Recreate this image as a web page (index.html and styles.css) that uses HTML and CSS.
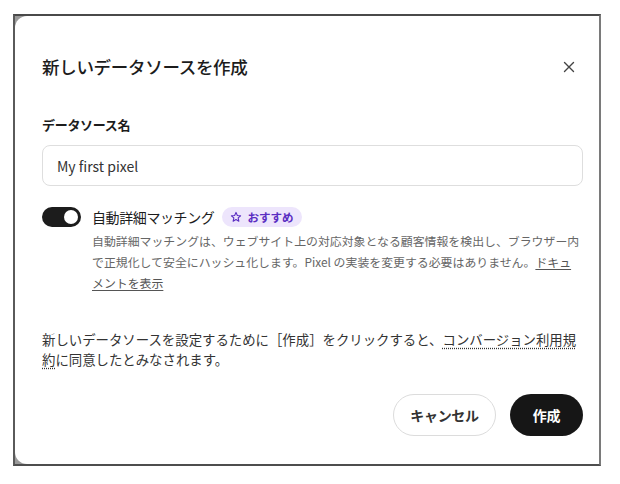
FILE: index.html
```html
<!DOCTYPE html>
<html lang="ja">
<head>
<meta charset="utf-8">
<title>新しいデータソースを作成</title>
<link rel="stylesheet" href="styles.css">
</head>
<body>
<div class="frame">
  <div class="dialog">
    <div class="header">
      <h1 class="title">新しいデータソースを作成</h1>
      <button class="close" aria-label="閉じる">
        <svg width="12" height="12" viewBox="0 0 12 12"><path d="M1.5 1.5 L10.5 10.5 M10.5 1.5 L1.5 10.5" stroke="#444" stroke-width="1.4" stroke-linecap="round" fill="none"/></svg>
      </button>
    </div>
    <label class="field-label">データソース名</label>
    <div class="input">My first pixel</div>
    <div class="option">
      <div class="toggle"><span class="knob"></span></div>
      <div class="option-body">
        <div class="option-head">
          <span class="option-title">自動詳細マッチング</span>
          <span class="badge">
            <svg width="12" height="12" viewBox="0 0 24 24"><path d="M12 2.8 L14.7 8.9 L21.2 9.5 L16.3 13.9 L17.7 20.4 L12 17 L6.3 20.4 L7.7 13.9 L2.8 9.5 L9.3 8.9 Z" fill="none" stroke="#5a2dc2" stroke-width="2.2" stroke-linejoin="round"/></svg>
            おすすめ
          </span>
        </div>
        <p class="option-desc">自動詳細マッチングは、ウェブサイト上の対応対象となる顧客情報を検出し、ブラウザー内で正規化して安全にハッシュ化します。Pixel の実装を変更する必要はありません。<a class="doc-link" href="#">ドキュメントを表示</a></p>
      </div>
    </div>
    <p class="terms">新しいデータソースを設定するために［作成］をクリックすると、<a class="terms-link" href="#">コンバージョン利用規約</a>に同意したとみなされます。</p>
    <div class="actions">
      <button class="btn btn-cancel">キャンセル</button>
      <button class="btn btn-primary">作成</button>
    </div>
  </div>
</div>
</body>
</html>
```

FILE: styles.css
```css
* { box-sizing: border-box; }
html, body { margin: 0; padding: 0; background: #ffffff; }
body {
  font-family: "Noto Sans CJK JP", "Noto Sans", sans-serif;
  color: #1c1c1c;
}
.frame {
  margin: 14px 0 0 13px;
  width: 588px;
  height: 452px;
  border-top: 2px solid #4a4a4a;
  border-left: 2px solid #5a5a5a;
  border-right: 2px solid #7a7a7a;
  border-bottom: 2px solid #4e4e4e;
  background: #9a9a9a;
}
.dialog {
  height: 100%;
  background: #ffffff;
  border-radius: 12px 0 0 12px;
  padding: 39px 16px 0 27px;
  display: flex;
  flex-direction: column;
}
.header {
  display: flex;
  align-items: center;
  justify-content: space-between;
  height: 24px;
}
.title {
  margin: 0;
  font-size: 17.5px;
  font-weight: 500;
  letter-spacing: -0.3px;
  line-height: 24px;
  color: #1c1c1c;
}
.close {
  border: 0;
  background: none;
  padding: 0;
  width: 24px;
  height: 24px;
  display: flex;
  align-items: center;
  justify-content: center;
  margin-right: 2px;
}
.field-label {
  display: block;
  margin-top: 37px;
  font-size: 13px;
  font-weight: 700;
  line-height: 18px;
  letter-spacing: -0.3px;
  color: #1c1c1c;
}
.input {
  margin-top: 11px;
  height: 41px;
  border: 1px solid #dedede;
  border-radius: 8px;
  padding: 0 14px;
  display: flex;
  align-items: center;
  font-size: 14px;
  color: #333333;
}
.option {
  margin-top: 20px;
  display: grid;
  grid-template-columns: 39px 1fr;
  column-gap: 11px;
}
.toggle {
  width: 39px;
  height: 20px;
  margin-top: 1px;
  border-radius: 10px;
  background: #1c1c1c;
  position: relative;
}
.knob {
  position: absolute;
  right: 3px;
  top: 3px;
  width: 14px;
  height: 14px;
  border-radius: 50%;
  background: #ffffff;
}
.option-head {
  display: flex;
  align-items: center;
  gap: 8px;
  height: 22px;
}
.option-title {
  font-size: 14px;
  line-height: 22px;
  letter-spacing: -0.4px;
  color: #1c1c1c;
}
.badge {
  display: inline-flex;
  align-items: center;
  gap: 5px;
  height: 20px;
  padding: 0 9px 0 8px;
  border-radius: 10px;
  background: #ede5fc;
  color: #5a2dc2;
  font-size: 11.5px;
  font-weight: 700;
}
.option-desc {
  margin: 2px 1.5px 0 0;
  font-size: 11.9px;
  line-height: 21px;
  color: #666666;
}
.doc-link {
  color: #555555;
  text-decoration: underline;
  text-underline-offset: 2px;
}
.terms {
  margin: 36px 0 0 0;
  font-size: 13.4px;
  line-height: 20px;
  color: #333333;
}
.terms-link {
  color: #333333;
  text-decoration: underline dotted;
  text-underline-offset: 3px;
}
.actions {
  margin-top: 25px;
  display: flex;
  justify-content: flex-end;
  gap: 14px;
}
.btn {
  height: 42px;
  border-radius: 21px;
  font-family: "Noto Sans CJK JP", "Noto Sans", sans-serif;
  font-size: 14px;
  font-weight: 700;
  letter-spacing: -0.3px;
  cursor: pointer;
}
.btn-cancel {
  width: 103px;
  background: #ffffff;
  border: 1px solid #dcdcdc;
  color: #333333;
}
.btn-primary {
  width: 73px;
  background: #161616;
  border: 0;
  color: #ffffff;
}
```
